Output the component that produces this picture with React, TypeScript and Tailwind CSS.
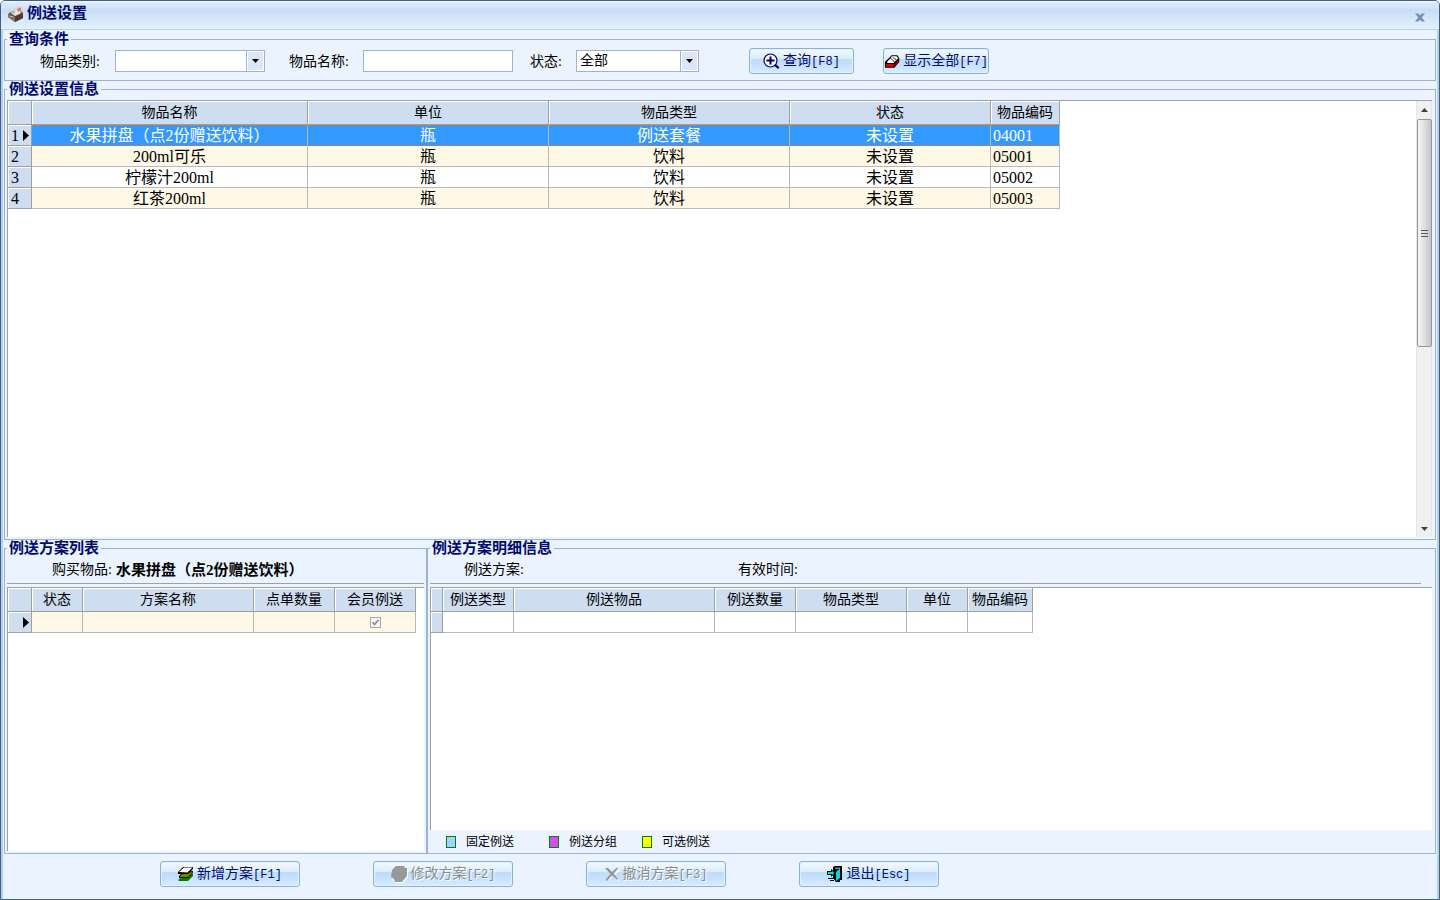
import type { ReactNode } from 'react';

type Align = 'center' | 'left';

const items = [
  { name: '水果拼盘（点2份赠送饮料）', unit: '瓶', type: '例送套餐', status: '未设置', code: '04001' },
  { name: '200ml可乐', unit: '瓶', type: '饮料', status: '未设置', code: '05001' },
  { name: '柠檬汁200ml', unit: '瓶', type: '饮料', status: '未设置', code: '05002' },
  { name: '红茶200ml', unit: '瓶', type: '饮料', status: '未设置', code: '05003' },
];

const legendItems = [
  { label: '固定例送', color: 'bg-[#a6d2ff]', box: 'w-[100px]' },
  { label: '例送分组', color: 'bg-[#d64ee8]', box: 'w-[90px]' },
  { label: '可选例送', color: 'bg-[#ffff00]', box: 'w-[90px]' },
];

function BoxIcon() {
  return (
    <svg width="16" height="17" viewBox="0 0 16 17" aria-hidden="true">
      <path d="M0 9 L4 6 L12 5 L15 8 L15 13 L7 17 L0 12 Z" fill="#6b5447" />
      <path d="M0 9 L7 12 L7 17 L0 12 Z" fill="#86705f" />
      <path d="M7 12 L15 8 L15 13 L7 17 Z" fill="#4d3b33" />
      <path d="M3 8 L5 3 L11 1 L13 8 L7 11 Z" fill="#e8e6e4" />
      <path d="M5 3 L11 1 L11 4 L6 6 Z" fill="#cfd8e6" />
      <path d="M9 4 L13 2 L13 5 L10 7 Z" fill="#d97862" />
      <path d="M4 6 L6 5 L7 8 L5 9 Z" fill="#9bb79a" />
      <path d="M2 11 h3 v1 h-3 Z" fill="#c9b8a5" />
    </svg>
  );
}

function SearchIcon() {
  return (
    <svg width="17" height="17" viewBox="0 0 17 17" aria-hidden="true">
      <circle cx="7.5" cy="7.5" r="6.5" fill="#f2f8ff" stroke="#00006e" strokeWidth="1.2" />
      <path d="M6.5 3.5 h2 v3 h3 v2 h-3 v3 h-2 v-3 h-3 v-2 h3 Z" fill="#000080" />
      <path d="M11.5 11.5 L13 11 L16.5 14.5 L15 16 L12 13.5 Z" fill="#000080" />
    </svg>
  );
}

function TrayIcon() {
  return (
    <svg width="17" height="15" viewBox="0 0 17 15" aria-hidden="true">
      <path d="M1 8 L5 4 L8 1 L14 1 L16 4 L16 8 L11 14 L1 14 Z" fill="#000" />
      <path d="M4 7 L7 4 L11 8 L10 9 L3 9 Z" fill="#fff" />
      <path d="M7 4 L8 2 L11 2 L13 6 L11 8 Z" fill="#fff" />
      <path d="M10 2 L13 2 L15 4 L13 6 Z" fill="#fff" />
      <path d="M7 4 L11 8 M9 3 L13 6" stroke="#000" strokeWidth="0.8" />
      <path d="M2 10 L10 10 L10 13 L2 13 Z" fill="#e60000" />
      <path d="M11 10 L15 6 L15 8 L11 13 Z" fill="#a00000" />
    </svg>
  );
}

function LayersIcon() {
  return (
    <svg width="16" height="16" viewBox="0 0 16 16" aria-hidden="true">
      <path d="M0 14 L5 10 L15 8 L15 10 L10 15 L1 15 Z" fill="#008000" />
      <path d="M1 10 L5 6 L15 5 L15 7 L10 12 L1 12 Z" fill="#000" />
      <path d="M2 10 L6 7 L15 6 L10 11 L2 11 Z" fill="#808000" />
      <path d="M0 6 L5 1 L15 1 L15 3 L10 8 L0 8 Z" fill="#000" />
      <path d="M1 6 L6 1.5 L14.5 1.5 L9.5 6.5 Z" fill="#fff" />
    </svg>
  );
}

function BlobIcon() {
  return (
    <svg width="17" height="17" viewBox="0 0 17 17" aria-hidden="true">
      <path d="M2 5 L6 1 L14 1 L17 3 L17 11 L12 17 L5 17 L1 13 Z" fill="#fff" />
      <path d="M1 4 L5 0 L13 0 L14 2 L16 2 L16 10 L11 16 L4 16 L3 13 L0 11 Z" fill="#989898" />
    </svg>
  );
}

function CrossIcon() {
  return (
    <svg width="15" height="15" viewBox="0 0 15 15" aria-hidden="true">
      <path d="M3 3 L14 14 M14 3 L2 14" stroke="#fff" strokeWidth="1.6" fill="none" />
      <path d="M0 1 L3 1 L7 5 L12 0.5 L13 1.5 L8.5 6.5 L13 12 L12.5 13 L7 8.5 L2 14 L0.5 13 L5.5 7 Z" fill="#949494" />
    </svg>
  );
}

function ExitIcon() {
  return (
    <svg width="16" height="16" viewBox="0 0 16 16" aria-hidden="true">
      <path d="M6 1 L8 0 L15 0 L15 14 L13 14 L13 16 L9 16 L7 13 L6 13 Z" fill="#000" />
      <path d="M8 1.5 L13 1.5 L13 3 L8 3 Z" fill="#808080" />
      <path d="M9 6 L13 2.5 L13 12 L9 15 Z" fill="#00d8e0" />
      <path d="M0 5 L4 5 L4 3 L9 7 L4 11 L4 9 L0 9 Z" fill="#000" />
      <path d="M1 6 L5 6 L5 5 L7.5 7 L5 9 L5 8 L1 8 Z" fill="#00e0e8" />
      <path d="M1 12 h5 v1 h-5 Z M3 14 h4 v1 h-4 Z" fill="#000" />
    </svg>
  );
}

function RowMarker() {
  return (
    <svg width="6" height="11" viewBox="0 0 6 11" aria-hidden="true">
      <path d="M0 0 L6 5.5 L0 11 Z" fill="#000" />
    </svg>
  );
}

function ToolButton({ icon, text, hotkey, width, disabled }: {
  icon: ReactNode;
  text: string;
  hotkey: string;
  width: string;
  disabled?: boolean;
}) {
  return (
    <button
      type="button"
      disabled={disabled}
      className={`${width} flex h-[26px] shrink-0 items-center justify-center gap-[3px] rounded-[3px] border border-[#86b3d9] bg-[linear-gradient(#f4faff,#dcebfb_40%,#bddff0_42%,#c2deff_60%,#d8ecff)] text-[14px] leading-[20px] whitespace-nowrap shadow-[inset_0_0_0_1px_#e4f2ff] ${
        disabled ? 'text-[#8c8c8c] [text-shadow:1px_1px_0_#fff]' : 'text-[#000d74]'
      }`}
    >
      {icon}
      <span>
        {text}
        <span className="font-['Liberation_Mono',monospace] text-[12px]">[{hotkey}]</span>
      </span>
    </button>
  );
}

function Group({ title, className, children }: { title: string; className: string; children: ReactNode }) {
  return (
    <fieldset className={`${className} flex min-w-0 flex-col border border-[#9db2cf]`}>
      <legend className="ml-[2px] h-[17px] px-[2px] text-[15px] leading-[17px] font-bold text-[#000a6e]">{title}</legend>
      {children}
    </fieldset>
  );
}

function SelectBox({ id, width, options }: { id: string; width: string; options: string[] }) {
  return (
    <div className={`${width} relative h-[22px] shrink-0`}>
      <select id={id} className="h-full w-full appearance-none border border-[#9cb4d3] bg-white pl-[3px] text-[14px] leading-[20px] text-black">
        {options.map((o) => (
          <option key={o}>{o}</option>
        ))}
      </select>
      <span className="pointer-events-none absolute inset-y-0 right-0 flex w-[19px] items-center justify-center border border-[#9cb4d3] bg-[#dbe7f5] shadow-[inset_0_0_0_1px_#fff]">
        <svg width="7" height="4" viewBox="0 0 7 4" aria-hidden="true">
          <path d="M0 0 H7 L3.5 4 Z" fill="#000" />
        </svg>
      </span>
    </div>
  );
}

const headCell =
  'border-r border-b border-[#a0a0a0] bg-[#cfddf0] p-0 text-center text-[14px] leading-[22px] font-normal whitespace-nowrap shadow-[inset_1px_1px_0_#fff]';

function Columns({ widths }: { widths: string[] }) {
  return (
    <colgroup>
      {widths.map((w, i) => (
        <col key={i} className={w} />
      ))}
    </colgroup>
  );
}

function HeadRow({ titles }: { titles: string[] }) {
  return (
    <thead>
      <tr className="h-[24px]">
        <th className={headCell} />
        {titles.map((t) => (
          <th key={t} scope="col" className={headCell}>
            {t}
          </th>
        ))}
      </tr>
    </thead>
  );
}

function ItemRow({ index }: { index: number }) {
  const item = items[index];
  const selected = index === 0;
  const tone = selected
    ? 'bg-[#3399ff] text-white border-y border-y-[#e07820] [border-top-style:dotted] [border-bottom-style:dotted]'
    : `${index % 2 ? 'bg-[#fff8e6]' : 'bg-white'} text-black border-b border-b-[#b8b8b8]`;
  const cells: { text: string; align: Align }[] = [
    { text: item.name, align: 'center' },
    { text: item.unit, align: 'center' },
    { text: item.type, align: 'center' },
    { text: item.status, align: 'center' },
    { text: item.code, align: 'left' },
  ];
  return (
    <tr className="h-[21px] text-[16px] leading-[19px]">
      <th scope="row" className={`${headCell}`}>
        <span className="flex items-center justify-between pr-[2px] pl-[3px] text-[16px] leading-[19px]">
          {index + 1}
          {selected && <RowMarker />}
        </span>
      </th>
      {cells.map((c, i) => (
        <td
          key={i}
          className={`${tone} border-r border-r-[#b8b8b8] py-0 whitespace-nowrap ${
            c.align === 'left' ? 'px-[2px] text-left' : 'px-0 text-center'
          }`}
        >
          {c.text}
        </td>
      ))}
    </tr>
  );
}

function ScrollBar() {
  return (
    <div className="flex w-[16px] shrink-0 flex-col items-center border-x border-[#e6e6e6] bg-[#f0f0f0]" aria-hidden="true">
      <div className="flex h-[18px] items-center">
        <svg width="7" height="4" viewBox="0 0 7 4">
          <path d="M3.5 0 L7 4 H0 Z" fill="#404040" />
        </svg>
      </div>
      <div className="flex h-[228px] w-[15px] flex-col items-center justify-center gap-[2px] rounded-[2px] border border-[#979797] bg-linear-to-r from-[#f5f5f5] via-[#e0e0e2] to-[#c2c2c8]">
        <i className="h-px w-[7px] bg-[#555]" />
        <i className="h-px w-[7px] bg-[#555]" />
        <i className="h-px w-[7px] bg-[#555]" />
      </div>
      <div className="flex-1" />
      <div className="flex h-[17px] items-center">
        <svg width="7" height="4" viewBox="0 0 7 4">
          <path d="M0 0 H7 L3.5 4 Z" fill="#404040" />
        </svg>
      </div>
    </div>
  );
}

const tableBase = 'table-fixed border-separate border-spacing-0';
const gridFrame = 'flex min-h-0 flex-1 items-start border-t border-l border-[#a0a0a0] bg-white';

export default function App() {
  return (
    <div className="flex h-screen flex-col rounded-t-[5px] border border-[#3c5f8c] bg-[#ebf3ff] font-['Liberation_Serif','Noto_Sans_CJK_SC',serif] text-[14px] text-black">
      <header className="flex h-[29px] shrink-0 items-center justify-between rounded-t-[4px] border-b border-[#b3d3ee] bg-[linear-gradient(#f4f9ff_0,#dce8f8_2px,#d6e4f7_7px,#c8dcf6_8px,#e4f1fe)] pr-[14px] pl-[7px]">
        <div className="flex items-center gap-[3px] pb-[4px]">
          <BoxIcon />
          <h1 className="text-[15px] leading-[20px] font-bold text-[#000a6e]">例送设置</h1>
        </div>
        <button type="button" aria-label="关闭" className="pt-[4px]">
          <svg width="10" height="9" viewBox="0 0 10 9" aria-hidden="true">
            <path d="M0 0.5 h3.5 l1.5 2 l1.5 -2 H10 L6.8 4.5 L10 8.5 H6.5 L5 6.5 L3.5 8.5 H0 L3.2 4.5 Z" fill="#7690b5" />
          </svg>
        </button>
      </header>

      <main className="flex min-h-0 flex-1 flex-col border-x-2 border-[#b5cfee] pt-px">
        <div className="flex min-h-0 flex-1 flex-col px-px">
          <Group title="查询条件" className="h-[50px] shrink-0">
            <form className="flex items-center pl-[35px]" onSubmit={(e) => e.preventDefault()}>
              <label htmlFor="category" className="w-[75px] shrink-0">物品类别:</label>
              <SelectBox id="category" width="w-[150px]" options={['']} />
              <label htmlFor="name" className="ml-[24px] w-[74px] shrink-0">物品名称:</label>
              <input id="name" type="text" className="h-[22px] w-[150px] shrink-0 border border-[#9cb4d3] bg-white px-[3px]" />
              <label htmlFor="status" className="ml-[17px] w-[46px] shrink-0">状态:</label>
              <SelectBox id="status" width="w-[123px]" options={['全部']} />
              <div className="ml-[50px] flex gap-[29px]">
                <ToolButton icon={<SearchIcon />} text="查询" hotkey="F8" width="w-[105px]" />
                <ToolButton icon={<TrayIcon />} text="显示全部" hotkey="F7" width="w-[106px]" />
              </div>
            </form>
          </Group>

          <Group title="例送设置信息" className="min-h-0 flex-1">
            <div className="flex min-h-0 flex-1 flex-col pt-[2px] pr-[3px] pb-[2px] pl-[2px]">
              <div className="flex min-h-0 flex-1 border-t border-l border-[#a0a0a0] bg-white">
                <div className="min-w-0 flex-1 overflow-hidden">
                  <table className={`${tableBase} w-[1052px]`}>
                    <Columns widths={['w-[24px]', 'w-[276px]', 'w-[241px]', 'w-[241px]', 'w-[201px]', 'w-[69px]']} />
                    <HeadRow titles={['物品名称', '单位', '物品类型', '状态', '物品编码']} />
                    <tbody>
                      {items.map((item, i) => (
                        <ItemRow key={item.code} index={i} />
                      ))}
                    </tbody>
                  </table>
                </div>
                <ScrollBar />
              </div>
            </div>
          </Group>

          <div className="flex h-[314px] shrink-0">
            <Group title="例送方案列表" className="w-[423px] shrink-0">
              <div className="flex min-h-0 flex-1 flex-col px-[2px] pb-[2px]">
                <p className="flex h-[27px] items-center gap-[4px] border-b border-[#a0a0a0] pl-[45px] leading-[20px]">
                  购买物品:
                  <strong className="text-[15px]">水果拼盘（点2份赠送饮料）</strong>
                </p>
                <div className={`${gridFrame} mt-[3px]`}>
                  <table className={`${tableBase} w-[408px]`}>
                    <Columns widths={['w-[24px]', 'w-[51px]', 'w-[171px]', 'w-[81px]', 'w-[81px]']} />
                    <HeadRow titles={['状态', '方案名称', '点单数量', '会员例送']} />
                    <tbody>
                      <tr className="h-[21px]">
                        <th className={headCell}>
                          <span className="flex justify-end pr-[2px]">
                            <RowMarker />
                          </span>
                        </th>
                        {[0, 1, 2].map((i) => (
                          <td key={i} className="border-r border-b border-[#b8b8b8] bg-[#fff8e6] p-0" />
                        ))}
                        <td className="border-r border-b border-[#b8b8b8] bg-[#fff8e6] p-0">
                          <label className="relative mx-auto flex h-[11px] w-[11px]">
                            <input
                              type="checkbox"
                              aria-label="会员例送"
                              defaultChecked
                              disabled
                              className="h-full w-full appearance-none border border-[#a8a8a8] bg-[#f7f7f7]"
                            />
                            <svg className="absolute inset-0" width="11" height="11" viewBox="0 0 11 11" aria-hidden="true">
                              <path d="M2.5 5 L4.5 7.5 L8.5 3" fill="none" stroke="#8c8c8c" strokeWidth="1.6" />
                            </svg>
                          </label>
                        </td>
                      </tr>
                    </tbody>
                  </table>
                </div>
              </div>
            </Group>

            <Group title="例送方案明细信息" className="flex-1">
              <div className="flex min-h-0 flex-1 flex-col pr-[3px] pl-[2px]">
                <div className="mr-[11px] flex h-[27px] items-center border-b border-[#a0a0a0] pl-[34px] leading-[20px]">
                  <span className="w-[274px]">例送方案:</span>
                  <span>有效时间:</span>
                </div>
                <div className={`${gridFrame} mt-[3px]`}>
                  <table className={`${tableBase} w-[602px]`}>
                    <Columns widths={['w-[12px]', 'w-[71px]', 'w-[201px]', 'w-[81px]', 'w-[111px]', 'w-[61px]', 'w-[65px]']} />
                    <HeadRow titles={['例送类型', '例送物品', '例送数量', '物品类型', '单位', '物品编码']} />
                    <tbody>
                      <tr className="h-[21px]">
                        <th className={headCell} />
                        {[0, 1, 2, 3, 4, 5].map((i) => (
                          <td key={i} className="border-r border-b border-[#b8b8b8] bg-white p-0" />
                        ))}
                      </tr>
                    </tbody>
                  </table>
                </div>
                <ul className="flex h-[23px] shrink-0 items-center gap-[3px] pl-[16px] text-[12px] leading-[16px]">
                  {legendItems.map((l) => (
                    <li key={l.label} className={`${l.box} flex items-center gap-[10px]`}>
                      <span className={`${l.color} h-[12px] w-[10px] border border-[#008000]`} />
                      {l.label}
                    </li>
                  ))}
                </ul>
              </div>
            </Group>
          </div>

          <footer className="flex h-[45px] shrink-0 items-start gap-[73px] pt-[7px] pl-[156px]">
            <ToolButton icon={<LayersIcon />} text="新增方案" hotkey="F1" width="w-[140px]" />
            <ToolButton icon={<BlobIcon />} text="修改方案" hotkey="F2" width="w-[140px]" disabled />
            <ToolButton icon={<CrossIcon />} text="撤消方案" hotkey="F3" width="w-[140px]" disabled />
            <ToolButton icon={<ExitIcon />} text="退出" hotkey="Esc" width="w-[140px]" />
          </footer>
        </div>
      </main>
    </div>
  );
}
